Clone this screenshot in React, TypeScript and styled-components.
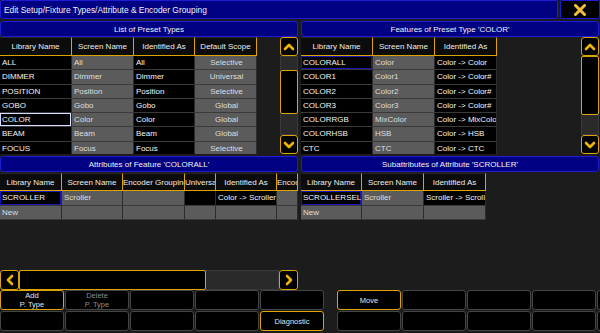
import styled, { createGlobalStyle } from 'styled-components';

const YELLOW = '#dca400';
const BLUE = '#000082';
const BLUE_EDGE = '#1c1cd4';

const GlobalStyle = createGlobalStyle`
    html, body {
        margin: 0;
        padding: 0;
        background: #1c1c1c;
    }
    * {
        box-sizing: border-box;
    }
`;

const Screen = styled.div`
    width: 600px;
    height: 333px;
    overflow: hidden;
    display: flex;
    flex-direction: column;
    background: #1c1c1c;
    font-family: 'Liberation Sans', Arial, sans-serif;
    font-size: 8px;
    color: #f2f2f2;
`;

const TitleRow = styled.div`
    flex: none;
    display: flex;
    gap: 2px;
    height: 19px;
    margin-bottom: 2px;
`;

const TitleBar = styled.div`
    flex: 1;
    display: flex;
    align-items: center;
    padding-left: 3px;
    background: ${BLUE};
    border: 1px solid ${BLUE_EDGE};
    border-radius: 2px;
    font-size: 8.4px;
`;

const CloseButton = styled.div`
    width: 40px;
    display: flex;
    align-items: center;
    justify-content: center;
    background: #000;
    border: 1px solid ${BLUE_EDGE};
    border-radius: 2px;
`;

const Panels = styled.div`
    flex: 1;
    min-height: 0;
    display: grid;
    grid-template-columns: 298px 298px;
    column-gap: 3px;
`;

const Column = styled.div`
    display: flex;
    flex-direction: column;
    min-height: 0;
`;

const PanelHeader = styled.div<{ $gap?: number }>`
    flex: none;
    height: 16px;
    margin-top: ${(p) => p.$gap || 0}px;
    margin-bottom: ${(p) => (p.$gap ? 1 : 0)}px;
    display: flex;
    align-items: center;
    justify-content: center;
    background: ${BLUE};
    border: 1px solid ${BLUE_EDGE};
    border-radius: 3px;
`;

const TableArea = styled.div`
    flex: none;
    height: 117px;
    display: flex;
    justify-content: space-between;
    overflow: hidden;
`;

const Table = styled.div<{ $cols: string; $head: number; $row: number }>`
    flex: none;
    align-self: flex-start;
    display: grid;
    grid-template-columns: ${(p) => p.$cols};
    grid-template-rows: ${(p) => p.$head}px;
    grid-auto-rows: ${(p) => p.$row}px;
`;

const HeadCell = styled.div`
    overflow: hidden;
    white-space: nowrap;
    text-align: center;
    line-height: 17px;
    background: #0c0c0c;
    border-top: 1px solid #262626;
    border-right: 1px solid ${YELLOW};
    border-bottom: 1px solid ${YELLOW};
    color: #ececec;
`;

const Cell = styled.div<{ $tone: 'dark' | 'gray'; $center?: boolean; $sel?: 'focus' | 'blue' }>`
    overflow: hidden;
    white-space: nowrap;
    padding-left: 2px;
    line-height: 13px;
    text-align: ${(p) => (p.$center ? 'center' : 'left')};
    background: ${(p) => (p.$tone === 'gray' ? '#5b5b5b' : '#000')};
    color: ${(p) => (p.$tone === 'gray' ? '#dedede' : '#f4f4f4')};
    border-right: 1px solid #2c2c2c;
    border-bottom: 1px solid #3a3a3a;
    box-shadow: ${(p) =>
        p.$sel === 'focus' ? 'inset 0 0 0 1px #d8dcff' : p.$sel === 'blue' ? 'inset 0 0 0 1px #1616b8' : 'none'};
`;

const VScroll = styled.div`
    flex: none;
    width: 18px;
    display: flex;
    flex-direction: column;
`;

const HScroll = styled.div`
    flex: none;
    height: 20px;
    display: flex;
`;

const ArrowButton = styled.div`
    flex: none;
    width: 18px;
    height: 19px;
    display: flex;
    align-items: center;
    justify-content: center;
    background: #000;
    border: 1px solid ${YELLOW};
    border-radius: 3px;
`;

const SideArrow = styled(ArrowButton)`
    width: 19px;
    height: 20px;
`;

const Track = styled.div<{ $horizontal?: boolean }>`
    flex: 1;
    display: flex;
    flex-direction: ${(p) => (p.$horizontal ? 'row' : 'column')};
    background: #2a2a2a;
    border: 1px solid #3a3a3a;
`;

const Thumb = styled.div<{ $offset: number; $size: number; $horizontal?: boolean }>`
    flex: none;
    ${(p) =>
        p.$horizontal
            ? `margin-left: ${p.$offset}px; width: ${p.$size}px; margin-top: -1px; margin-bottom: -1px;`
            : `margin-top: ${p.$offset}px; height: ${p.$size}px; margin-left: -1px; margin-right: -1px;`}
    background: #000;
    border: 1px solid ${YELLOW};
    border-radius: 2px;
`;

const Spacer = styled.div`
    flex: 1;
`;

const ButtonBar = styled.div`
    flex: none;
    display: flex;
    gap: 13px;
    margin-bottom: 2px;
`;

const KeyGroup = styled.div`
    display: grid;
    grid-template-columns: repeat(5, 64px);
    grid-auto-rows: 20px;
    gap: 1px;
`;

const Key = styled.div<{ $active?: boolean; $dim?: boolean }>`
    display: flex;
    align-items: center;
    justify-content: center;
    text-align: center;
    white-space: pre-line;
    line-height: 9px;
    font-size: 7.5px;
    background: #000;
    border: 1px solid ${(p) => (p.$active ? YELLOW : '#464646')};
    border-radius: 3px;
    color: ${(p) => (p.$dim ? '#8c8c8c' : '#e4e4e4')};
`;

type CellData = { text: string; tone: 'dark' | 'gray'; center?: boolean; sel?: 'focus' | 'blue' };

const d = (text: string, sel?: 'focus' | 'blue'): CellData => ({ text, tone: 'dark', sel });
const g = (text: string, center?: boolean): CellData => ({ text, tone: 'gray', center });

const presetTypes: CellData[][] = [
    [d('ALL'), g('All'), d('All'), g('Selective', true)],
    [d('DIMMER'), g('Dimmer'), d('Dimmer'), g('Universal', true)],
    [d('POSITION'), g('Position'), d('Position'), g('Selective', true)],
    [d('GOBO'), g('Gobo'), d('Gobo'), g('Global', true)],
    [d('COLOR', 'focus'), g('Color'), d('Color'), g('Global', true)],
    [d('BEAM'), g('Beam'), d('Beam'), g('Global', true)],
    [d('FOCUS'), g('Focus'), d('Focus'), g('Selective', true)],
];

const features: CellData[][] = [
    [d('COLORALL', 'blue'), g('Color'), d('Color -> Color')],
    [d('COLOR1'), g('Color1'), d('Color -> Color#')],
    [d('COLOR2'), g('Color2'), d('Color -> Color#')],
    [d('COLOR3'), g('Color3'), d('Color -> Color#')],
    [d('COLORRGB'), g('MixColor'), d('Color -> MixColor')],
    [d('COLORHSB'), g('HSB'), d('Color -> HSB')],
    [d('CTC'), g('CTC'), d('Color -> CTC')],
];

const attributes: CellData[][] = [
    [d('SCROLLER', 'blue'), g('Scroller'), g(''), d(''), d('Color -> Scroller'), g('')],
    [g('New'), g(''), g(''), g(''), g(''), g('')],
];

const subattributes: CellData[][] = [
    [d('SCROLLERSELECT', 'blue'), g('Scroller'), d('Scroller -> Scroller')],
    [g('New'), g(''), g('')],
];

const Chevron = ({ dir }: { dir: 'up' | 'down' | 'left' | 'right' }) => {
    const points = {
        up: '2,7 6,3 10,7',
        down: '2,3 6,7 10,3',
        left: '7,2 3,6 7,10',
        right: '3,2 7,6 3,10',
    }[dir];
    const vertical = dir === 'up' || dir === 'down';
    return (
        <svg width={vertical ? 12 : 10} height={vertical ? 10 : 12} viewBox={vertical ? '0 0 12 10' : '0 0 10 12'}>
            <polyline points={points} fill="none" stroke="#f0b400" strokeWidth="2.6" strokeLinecap="round" strokeLinejoin="round" />
        </svg>
    );
};

const DataTable = ({
    cols,
    head,
    row,
    headers,
    rows,
}: {
    cols: string;
    head: number;
    row: number;
    headers: string[];
    rows: CellData[][];
}) => (
    <Table $cols={cols} $head={head} $row={row}>
        {headers.map((h) => (
            <HeadCell key={h}>{h}</HeadCell>
        ))}
        {rows.map((r, i) =>
            r.map((c, j) => (
                <Cell key={`${i}-${j}`} $tone={c.tone} $center={c.center} $sel={c.sel}>
                    {c.text}
                </Cell>
            )),
        )}
    </Table>
);

const VerticalScrollbar = ({ offset, size }: { offset: number; size: number }) => (
    <VScroll>
        <ArrowButton>
            <Chevron dir="up" />
        </ArrowButton>
        <Track>
            <Thumb $offset={offset} $size={size} />
        </Track>
        <ArrowButton>
            <Chevron dir="down" />
        </ArrowButton>
    </VScroll>
);

const leftKeys = [
    { label: 'Add\nP. Type', active: true },
    { label: 'Delete\nP. Type', dim: true },
    { label: '' },
    { label: '' },
    { label: '' },
    { label: '' },
    { label: '' },
    { label: '' },
    { label: '' },
    { label: 'Diagnostic', active: true },
];

const rightKeys = [
    { label: 'Move', active: true },
    ...Array.from({ length: 9 }, () => ({ label: '' })),
];

const App = () => {
    return (
        <>
            <GlobalStyle />
            <Screen>
                <TitleRow>
                    <TitleBar>Edit Setup/Fixture Types/Attribute &amp; Encoder Grouping</TitleBar>
                    <CloseButton>
                        <svg width="14" height="12" viewBox="0 0 14 12">
                            <path d="M2.5 1.5 L11.5 10.5 M11.5 1.5 L2.5 10.5" stroke="#f2c03a" strokeWidth="3" strokeLinecap="round" />
                        </svg>
                    </CloseButton>
                </TitleRow>

                <Panels>
                    <Column>
                        <PanelHeader>List of Preset Types</PanelHeader>
                        <TableArea>
                            <DataTable
                                cols="72px 62px 61px 62px"
                                head={19}
                                row={14.3}
                                headers={['Library Name', 'Screen Name', 'Identified As', 'Default Scope']}
                                rows={presetTypes}
                            />
                            <VerticalScrollbar offset={13} size={44} />
                        </TableArea>
                        <PanelHeader $gap={2}>Attributes of Feature 'COLORALL'</PanelHeader>
                        <DataTable
                            cols="62px 61px 62px 31px 61px 21px"
                            head={18}
                            row={14.5}
                            headers={['Library Name', 'Screen Name', 'Encoder Grouping', 'Universal', 'Identified As', 'Encoder']}
                            rows={attributes}
                        />
                        <Spacer />
                        <HScroll>
                            <SideArrow>
                                <Chevron dir="left" />
                            </SideArrow>
                            <Track $horizontal>
                                <Thumb $horizontal $offset={-1} $size={187} />
                            </Track>
                            <SideArrow>
                                <Chevron dir="right" />
                            </SideArrow>
                        </HScroll>
                    </Column>

                    <Column>
                        <PanelHeader>Features of Preset Type 'COLOR'</PanelHeader>
                        <TableArea>
                            <DataTable
                                cols="72px 62px 62px"
                                head={19}
                                row={14.3}
                                headers={['Library Name', 'Screen Name', 'Identified As']}
                                rows={features}
                            />
                            <VerticalScrollbar offset={-1} size={59} />
                        </TableArea>
                        <PanelHeader $gap={2}>Subattributes of Attribute 'SCROLLER'</PanelHeader>
                        <DataTable
                            cols="61px 62px 62px"
                            head={18}
                            row={14.5}
                            headers={['Library Name', 'Screen Name', 'Identified As']}
                            rows={subattributes}
                        />
                        <Spacer />
                    </Column>
                </Panels>

                <ButtonBar>
                    <KeyGroup>
                        {leftKeys.map((k, i) => (
                            <Key key={i} $active={k.active} $dim={k.dim}>
                                {k.label}
                            </Key>
                        ))}
                    </KeyGroup>
                    <KeyGroup>
                        {rightKeys.map((k, i) => (
                            <Key key={i} $active={k.active}>
                                {k.label}
                            </Key>
                        ))}
                    </KeyGroup>
                </ButtonBar>
            </Screen>
        </>
    );
};

export default App;
